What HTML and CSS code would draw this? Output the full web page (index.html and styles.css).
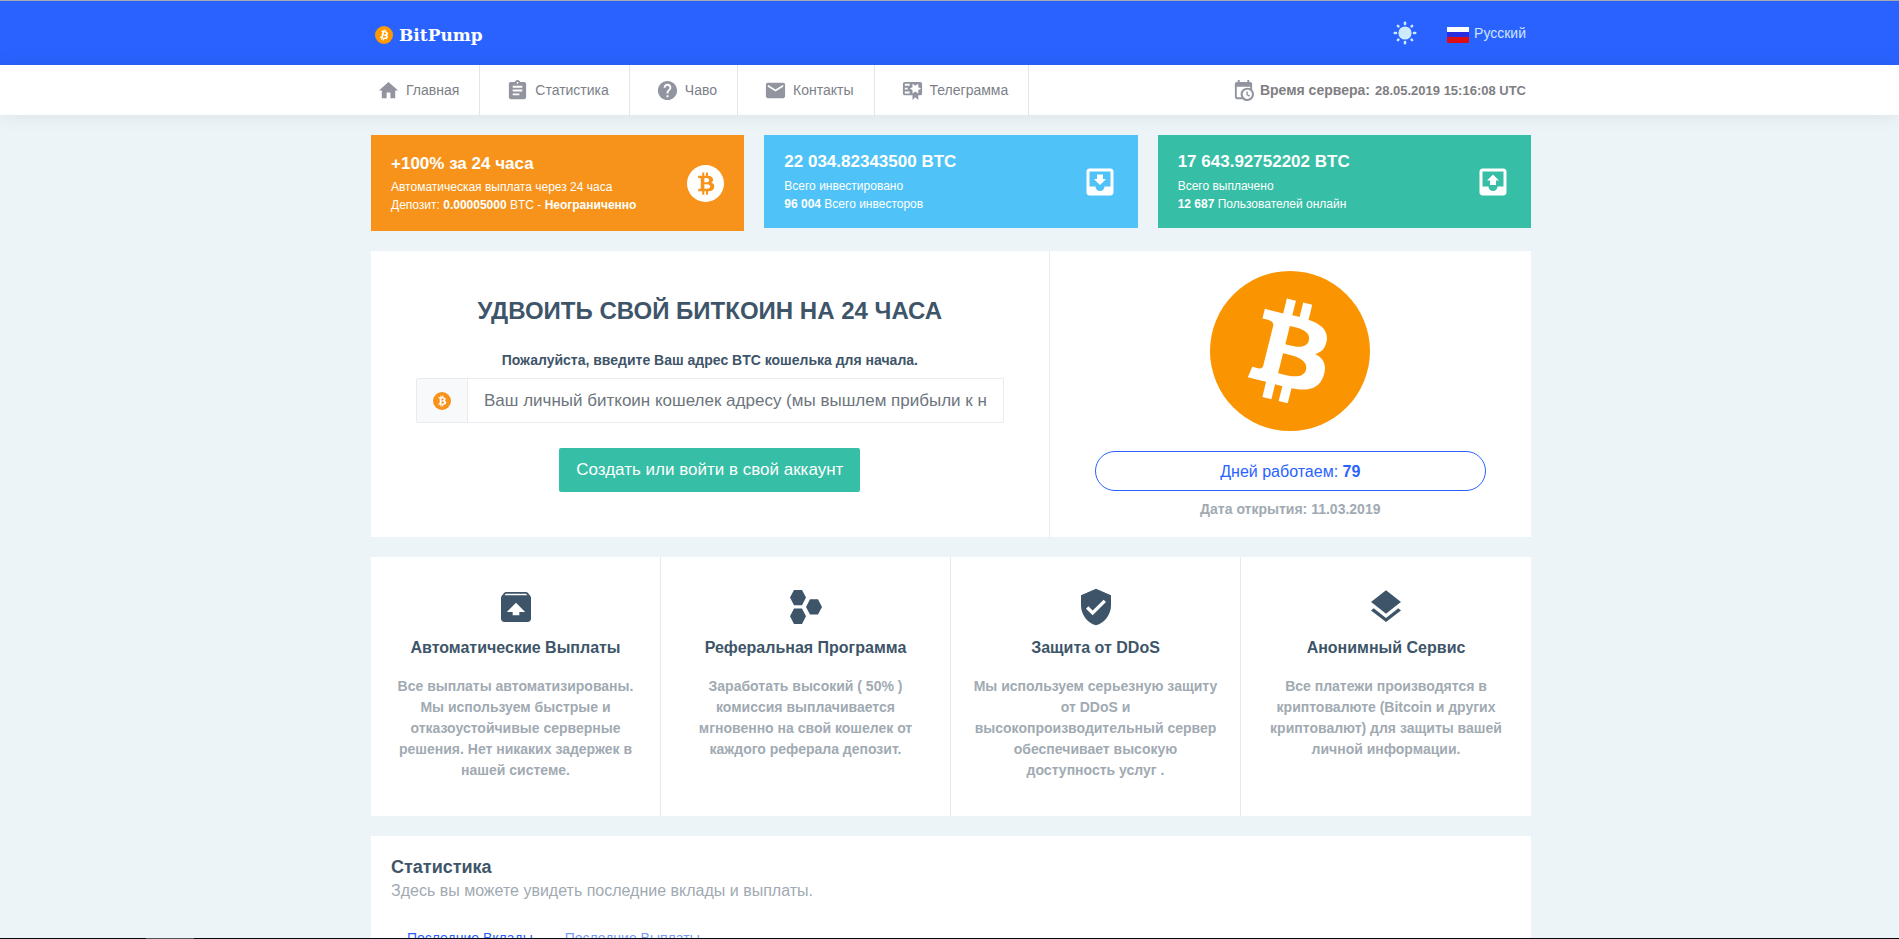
FILE: index.html
```html
<!DOCTYPE html>
<html lang="ru">
<head>
<meta charset="utf-8">
<title>BitPump</title>
<link rel="stylesheet" href="styles.css">
</head>
<body>
<svg class="defs" aria-hidden="true">
  <symbol id="btc" viewBox="0 0 32 32"><path d="M23.189 14.02c.314-2.096-1.283-3.223-3.465-3.975l.708-2.84-1.728-.43-.69 2.765c-.454-.114-.92-.22-1.385-.326l.695-2.783L15.596 6l-.708 2.839c-.376-.086-.746-.17-1.104-.26l.002-.009-2.384-.595-.46 1.846s1.283.294 1.256.312c.7.175.826.638.805 1.006l-.806 3.235c.048.012.11.03.18.057l-.183-.045-1.13 4.532c-.086.212-.303.531-.793.41.018.025-1.256-.313-1.256-.313l-.858 1.978 2.25.561c.418.105.828.215 1.231.318l-.715 2.872 1.727.43.708-2.84c.472.127.93.245 1.378.357l-.706 2.828 1.728.43.715-2.866c2.948.558 5.164.333 6.097-2.333.752-2.146-.037-3.385-1.588-4.192 1.13-.26 1.98-1.003 2.207-2.538zm-3.95 5.538c-.533 2.147-4.148.986-5.32.695l.95-3.805c1.172.293 4.929.872 4.37 3.11zm.535-5.569c-.487 1.953-3.495.96-4.47.717l.86-3.45c.975.243 4.118.696 3.61 2.733z"/></symbol>
</svg>

<header class="topbar">
  <div class="container topbar-inner">
    <a class="logo" href="#">
      <svg class="logo-mark" viewBox="0 0 32 32"><circle cx="16" cy="16" r="16" fill="#f90"/><use href="#btc" fill="#fff"/></svg>
      <span>BitPump</span>
    </a>
    <div class="topbar-right">
      <button class="theme" type="button" aria-label="Тема">
        <svg viewBox="0 0 24 24"><circle cx="12" cy="12" r="6.6" fill="#cdeafe"/><g stroke="#cdeafe" stroke-width="2.6" stroke-linecap="round"><path d="M12 1.8v1.200M12 21v1.200M1.800 12H3M21 12h1.200M4.900 4.900l.5.5M18.600 18.600l.5.5M4.900 19.100l.5-.5M18.600 5.400l.5-.5"/></g></svg>
      </button>
      <a class="lang" href="#">
        <svg class="flag" viewBox="0 0 22 16"><path fill="#fff" d="M0 0h22v5H0z"/><path fill="#2a2ce0" d="M0 5h22v5H0z"/><path fill="#dc0d15" d="M0 10h22v6H0z"/></svg>
        <span>Русский</span>
      </a>
    </div>
  </div>
</header>

<nav class="menu">
  <div class="container menu-inner">
    <a class="menu-item" href="#"><svg class="ico" viewBox="0 0 24 24"><path d="M10 20v-6h4v6h5v-8h3L12 3 2 12h3v8z"/></svg>Главная</a>
    <a class="menu-item" href="#"><svg class="ico" viewBox="0 0 24 24"><path d="M19 3h-4.180C14.400 1.840 13.300 1 12 1c-1.300 0-2.400.840-2.820 2H5c-1.100 0-2 .9-2 2v14c0 1.100.9 2 2 2h14c1.100 0 2-.9 2-2V5c0-1.100-.9-2-2-2zm-7 0c.55 0 1 .45 1 1s-.45 1-1 1-1-.45-1-1 .45-1 1-1zm2 14H7v-2h7v2zm3-4H7v-2h10v2zm0-4H7V7h10v2z"/></svg>Статистика</a>
    <a class="menu-item" href="#"><svg class="ico" viewBox="0 0 24 24"><path d="M12 2C6.480 2 2 6.480 2 12s4.480 10 10 10 10-4.480 10-10S17.520 2 12 2zm1 17h-2v-2h2v2zm2.070-7.750l-.9.92C13.450 12.900 13 13.500 13 15h-2v-.5c0-1.100.45-2.100 1.170-2.830l1.240-1.260c.37-.36.59-.86.59-1.410 0-1.100-.9-2-2-2s-2 .9-2 2H8c0-2.210 1.790-4 4-4s4 1.790 4 4c0 .88-.36 1.680-.93 2.250z"/></svg>Чаво</a>
    <a class="menu-item" href="#"><svg class="ico" viewBox="0 0 24 24"><path d="M20 4H4c-1.100 0-2 .9-2 2v12c0 1.100.9 2 2 2h16c1.100 0 2-.9 2-2V6c0-1.100-.9-2-2-2zm0 4l-8 5-8-5V6l8 5 8-5v2z"/></svg>Контакты</a>
    <a class="menu-item" href="#"><svg class="ico" viewBox="0 0 24 24"><path d="M4 3C2.890 3 2 3.890 2 5v10a2 2 0 0 0 2 2h8v5l3-3 3 3v-5h2a2 2 0 0 0 2-2V5a2 2 0 0 0-2-2H4m8 2l3 2 3-2v3.500l3 1.500-3 1.500V15l-3-2-3 2v-3.500L9 10l3-1.500V5M4 5h5v2H4V5m0 4h3v2H4V9m0 4h5v2H4v-2z"/></svg>Телеграмма</a>
    <div class="clock">
      <svg class="ico" viewBox="0 0 24 24"><path d="M15 13h1.500v2.820l2.440 1.410-.75 1.300L15 16.690V13m4-5H5v11h4.670C9.240 18.090 9 17.070 9 16a7 7 0 0 1 7-7c1.070 0 2.090.24 3 .67V8M5 21c-1.110 0-2-.9-2-2V5c0-1.110.89-2 2-2h1V1h2v2h8V1h2v2h1a2 2 0 0 1 2 2v6.100c1.240 1.260 2 2.990 2 4.900a7 7 0 0 1-7 7c-1.910 0-3.640-.76-4.900-2H5m11-9.850A4.850 4.850 0 0 0 11.150 16c0 2.680 2.170 4.850 4.850 4.850A4.850 4.850 0 0 0 20.850 16c0-2.680-2.170-4.850-4.850-4.850z"/></svg>
      <span>Время сервера:</span>
      <time>28.05.2019 15:16:08 UTC</time>
    </div>
  </div>
</nav>

<main class="container content">
  <section class="tiles">
    <article class="tile tile-orange">
      <div>
        <h2>+100% за 24 часа</h2>
        <p>Автоматическая выплата через 24 часа</p>
        <p>Депозит: <b>0.00005000</b> BTC - <b>Неограниченно</b></p>
      </div>
      <svg class="coin" viewBox="0 0 32 32"><circle cx="16" cy="16" r="16" fill="#fff"/><use href="#btc" fill="#f7931a" transform="rotate(-14 16 16)"/></svg>
    </article>
    <article class="tile tile-blue">
      <div>
        <h2>22 034.82343500 BTC</h2>
        <p>Всего инвестировано</p>
        <p><b>96 004</b> Всего инвесторов</p>
      </div>
      <svg class="box" viewBox="0 0 24 24"><path d="M19 3H5c-1.110 0-2 .9-2 2v14c0 1.100.88 2 2 2h14c1.100 0 2-.9 2-2V5c0-1.100-.9-2-2-2zm0 12h-4c0 1.660-1.350 3-3 3s-3-1.340-3-3H5V5h14v10zm-3-5h-2V7h-4v3H8l4 4 4-4z"/></svg>
    </article>
    <article class="tile tile-green">
      <div>
        <h2>17 643.92752202 BTC</h2>
        <p>Всего выплачено</p>
        <p><b>12 687</b> Пользователей онлайн</p>
      </div>
      <svg class="box" viewBox="0 0 24 24"><path d="M19 3H5c-1.110 0-2 .9-2 2v14c0 1.100.88 2 2 2h14c1.100 0 2-.9 2-2V5c0-1.100-.9-2-2-2zm0 12h-4c0 1.660-1.350 3-3 3s-3-1.340-3-3H5V5h14v10zM8 11h2v3h4v-3h2l-4-4z"/></svg>
    </article>
  </section>

  <section class="panel hero">
    <form class="join" onsubmit="return false">
      <h1>УДВОИТЬ СВОЙ БИТКОИН НА 24 ЧАСА</h1>
      <label for="wallet">Пожалуйста, введите Ваш адрес BTC кошелька для начала.</label>
      <div class="field">
        <span class="addon"><svg viewBox="0 0 32 32"><circle cx="16" cy="16" r="16" fill="#f7931a"/><use href="#btc" fill="#fff" transform="rotate(-14 16 16)"/></svg></span>
        <input id="wallet" type="text" placeholder="Ваш личный биткоин кошелек адресу (мы вышлем прибыли к нему)">
      </div>
      <button class="submit" type="submit">Создать или войти в свой аккаунт</button>
    </form>
    <div class="uptime">
      <svg class="big-coin" viewBox="0 0 32 32"><circle cx="16" cy="16" r="16" fill="#fa9400"/><use href="#btc" fill="#fff" transform="translate(-1 -.8) scale(1.05)"/></svg>
      <div class="pill">Дней работаем: <b>79</b></div>
      <p>Дата открытия: 11.03.2019</p>
    </div>
  </section>

  <section class="panel features">
    <article>
      <svg viewBox="0 0 24 24"><path d="M20.550 5.220l-1.390-1.680C18.880 3.210 18.470 3 18 3H6c-.47 0-.88.210-1.150.55L3.460 5.220C3.170 5.570 3 6.010 3 6.500V19c0 1.100.89 2 2 2h14c1.100 0 2-.9 2-2V6.500c0-.49-.17-.93-.45-1.280zM12 9.500l5.500 5.500H14v2h-4v-2H6.500L12 9.500zM5.120 5l.82-1h12l.93 1H5.120z"/></svg>
      <h3>Автоматические Выплаты</h3>
      <p>Все выплаты автоматизированы. Мы используем быстрые и отказоустойчивые серверные решения. Нет никаких задержек в нашей системе.</p>
    </article>
    <article>
      <svg viewBox="0 0 40 40"><path d="M8 3h8l4 7.600-4 7.700H8l-4-7.700zM24 12.200h8l4 7.700-4 7.700h-8l-4-7.700zM8 21.600h8l4 7.700-4 7.700H8l-4-7.700z"/></svg>
      <h3>Реферальная Программа</h3>
      <p>Заработать высокий ( 50% ) комиссия выплачивается мгновенно на свой кошелек от каждого реферала депозит.</p>
    </article>
    <article>
      <svg viewBox="0 0 24 24"><path d="M12 1L3 5v6c0 5.550 3.840 10.740 9 12 5.160-1.260 9-6.450 9-12V5l-9-4zm-2 16l-4-4 1.410-1.410L10 14.170l6.590-6.590L18 9l-8 8z"/></svg>
      <h3>Защита от DDoS</h3>
      <p>Мы используем серьезную защиту от DDoS и высокопроизводительный сервер обеспечивает высокую доступность услуг .</p>
    </article>
    <article>
      <svg viewBox="0 0 24 24"><path d="M12 18.540l-7.380-5.730L3 14.070l9 7 9-7-1.630-1.270L12 18.540zM12 16l7.360-5.730L21 9l-9-7-9 7 1.630 1.270L12 16z"/></svg>
      <h3>Анонимный Сервис</h3>
      <p>Все платежи производятся в криптовалюте (Bitcoin и других криптовалют) для защиты вашей личной информации.</p>
    </article>
  </section>

  <section class="panel stats">
    <h2>Статистика</h2>
    <p>Здесь вы можете увидеть последние вклады и выплаты.</p>
    <div class="tabs">
      <a class="tab tab-active" href="#">Последние Вклады</a>
      <a class="tab" href="#">Последние Выплаты</a>
    </div>
  </section>
</main>
<div class="edge"><span></span></div>
</body>
</html>
```
FILE: styles.css
```css
* { box-sizing: border-box; }
body {
  margin: 0;
  height: 100vh;
  overflow: hidden;
  background: #ecf4f8;
  color: #3e5569;
  font: 14px/21px "Liberation Sans", Arial, sans-serif;
}
h1, h2, h3, p { margin: 0; }
a { text-decoration: none; }
button, input { font-family: inherit; }
.defs { display: none; }
.container { max-width: 1163px; margin: 0 auto; padding-left: 3px; }

.topbar { background: #2962ff; border-top: 1px solid #a9a9b0; }
.topbar-inner { display: flex; align-items: center; justify-content: space-between; height: 64px; }
.logo {
  display: flex; align-items: center; gap: 6px; margin-left: 4px; padding-top: 3px;
  color: #fff; font: bold 17px/20px "DejaVu Serif", serif;
}
.logo-mark { width: 18px; height: 18px; }
.topbar-right { display: flex; align-items: center; gap: 30px; padding-right: 5px; }
.theme { display: flex; padding: 0; border: 0; background: none; }
.theme svg { width: 24px; height: 24px; }
.lang { display: flex; align-items: center; gap: 5px; color: #cfe5ff; }
.flag { width: 22px; height: 16px; margin-top: 4px; }

.menu { position: relative; background: #fff; box-shadow: 0 0 20px rgba(0, 0, 0, .08); }
.menu-inner { display: flex; height: 50px; }
.menu-item {
  display: flex; align-items: center; gap: 6px;
  padding: 0 20px 0 26px;
  border-right: 1px solid #e0e7ec;
  color: #7c7f87;
}
.menu-item:first-child { padding-left: 6px; }
.ico { width: 23px; height: 23px; fill: #9295a0; }
.clock {
  display: flex; align-items: center; gap: 5px;
  margin-left: auto; padding-right: 5px;
  color: #807e83; font-weight: bold;
}
.clock time { font-size: 13px; }

.content { display: grid; gap: 20px; padding-top: 20px; }
.tiles { display: grid; grid-template-columns: repeat(3, 1fr); gap: 20px; align-items: start; min-height: 96px; }
.tile {
  display: flex; align-items: center; justify-content: space-between;
  min-height: 93px; padding: 0 20px; color: #fff;
}
.tile h2 { margin-bottom: 3px; font-size: 17px; line-height: 24px; }
.tile p { font-size: 12px; line-height: 18px; }
.tile-orange { min-height: 96px; background: #f7931a; }
.tile-orange h2 { margin-bottom: 2px; }
.tile-orange p:last-child { padding-bottom: 1px; }
.tile-blue { background: #4fc3f7; }
.tile-green { background: #36bea6; }
.coin { width: 37px; height: 37px; }
.box { width: 36px; height: 36px; fill: #fff; }

.panel { background: #fff; }
.hero { display: grid; grid-template-columns: 58.5% 1fr; min-height: 286px; text-align: center; }
.join { display: flex; flex-direction: column; align-items: center; padding: 45px 45px 0; border-right: 1px solid #e9ecef; }
.join h1 { margin-bottom: 25px; font-size: 24px; line-height: 30px; }
.join label { padding-bottom: 8px; font-weight: bold; line-height: 19px; }
.field { display: flex; width: 100%; height: 45px; margin-bottom: 25px; border: 1px solid #e9ecef; border-radius: 2px; }
.addon { display: flex; align-items: center; justify-content: center; width: 51px; background: #f8f9fa; border-right: 1px solid #e9ecef; }
.addon svg { width: 18px; height: 18px; }
.field input { flex: 1; min-width: 0; padding: 0 16px; border: 0; background: none; font-size: 17px; }
.field input::placeholder { color: #6c757d; opacity: 1; }
.submit { height: 44px; padding: 0 17px; border: 0; border-radius: 2px; background: #36bea6; color: #fff; font-size: 17px; }
.uptime { display: flex; flex-direction: column; align-items: center; padding: 20px 45px 0; }
.big-coin { width: 160px; height: 160px; }
.pill {
  width: 100%; height: 40px; margin: 20px 0 8px;
  border: 1px solid #2962ff; border-radius: 20px;
  color: #2962ff; font-size: 16px; line-height: 40px;
}
.uptime p { color: #a1aab2; font-weight: bold; }

.features { display: grid; grid-template-columns: repeat(4, 1fr); min-height: 259px; text-align: center; }
.features article { padding: 30px 20px 0; border-right: 1px solid #e3ebf0; }
.features article:last-child { border-right: 0; }
.features svg { display: block; width: 40px; height: 40px; margin: 0 auto 9px; fill: #3e5569; }
.features h3 { margin-bottom: 16px; font-size: 16px; line-height: 24px; }
.features p { color: #a1aab2; font-weight: bold; }

.stats { padding: 20px; }
.stats h2 { font-size: 18px; line-height: 22px; }
.stats p { padding-top: 1px; color: #a1aab2; font-size: 16px; line-height: 24px; }
.tabs { display: flex; gap: 32px; padding: 25px 16px; }
.tab { color: #7b9cf7; }
.tab-active { color: #2962ff; }

.edge { position: fixed; left: 0; right: 0; bottom: 0; height: 1px; padding-left: 146px; background: #05080f; }
.edge span { display: block; width: 48px; height: 1px; background: #55575c; }
```
